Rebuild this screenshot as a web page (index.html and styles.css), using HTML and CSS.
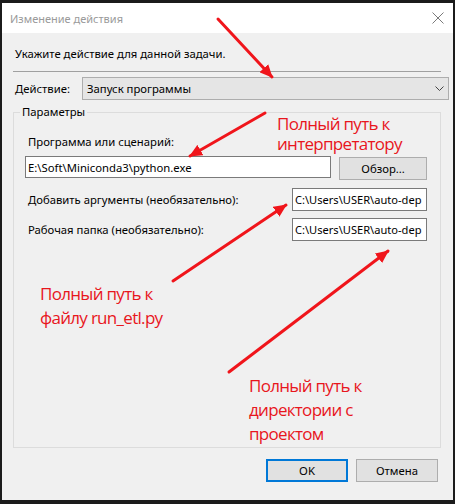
FILE: index.html
```html
<!DOCTYPE html>
<html lang="ru">
<head>
<meta charset="utf-8">
<title>Изменение действия</title>
<link rel="stylesheet" href="styles.css">
</head>
<body>
<div class="window">
  <div class="titlebar">
    <span class="title">Изменение действия</span>
    <svg class="close" width="12" height="12" viewBox="0 0 12 12"><path d="M0.5 0.5 L11.5 11.5 M11.5 0.5 L0.5 11.5" stroke="#7a7a7a" stroke-width="1" fill="none"/></svg>
  </div>
  <div class="content">
    <div class="prompt">Укажите действие для данной задачи.</div>
    <div class="separator"></div>
    <div class="action-row">
      <span class="action-label">Действие:</span>
      <div class="combo">
        <span>Запуск программы</span>
        <svg class="chevron" width="9" height="5" viewBox="0 0 9 5"><path d="M0.5 0.5 L4.5 4.5 L8.5 0.5" stroke="#444" stroke-width="1" fill="none"/></svg>
      </div>
    </div>
    <fieldset class="params">
      <legend>Параметры</legend>
      <div class="params-inner">
        <div class="field-label">Программа или сценарий:</div>
        <div class="program-row">
          <div class="input wide">E:\Soft\Miniconda3\python.exe</div>
          <div class="button browse">Обзор...</div>
        </div>
        <div class="opt-row">
          <span class="opt-label">Добавить аргументы (необязательно):</span>
          <div class="input narrow">C:\Users\USER\auto-dep</div>
        </div>
        <div class="opt-row">
          <span class="opt-label">Рабочая папка (необязательно):</span>
          <div class="input narrow">C:\Users\USER\auto-dep</div>
        </div>
      </div>
    </fieldset>
    <div class="buttons">
      <div class="button ok">OK</div>
      <div class="button">Отмена</div>
    </div>
  </div>
</div>

<svg class="arrows" width="455" height="504" viewBox="0 0 455 504">
  <defs>
    <marker id="head" markerUnits="userSpaceOnUse" markerWidth="14" markerHeight="12" refX="12" refY="6" orient="auto">
      <path d="M0 0 L13 6 L0 12 Z" fill="#f0151b"/>
    </marker>
  </defs>
  <g stroke="#f0151b" stroke-width="3" stroke-linecap="round" marker-end="url(#head)">
    <line x1="218" y1="19" x2="272" y2="77"/>
    <line x1="265" y1="113" x2="190" y2="156"/>
    <line x1="173" y1="281" x2="286" y2="205"/>
    <line x1="229" y1="372" x2="388" y2="251"/>
  </g>
</svg>
<div class="note note-1">Полный путь к<br>интерпретатору</div>
<div class="note note-2">Полный путь к<br>файлу run_etl.py</div>
<div class="note note-3">Полный путь к<br>директории с<br>проектом</div>
</body>
</html>
```
FILE: styles.css
```css
html, body {
  margin: 0;
  padding: 0;
}
body {
  width: 455px;
  height: 504px;
  background: #1b1b1b;
  position: relative;
  overflow: hidden;
  font-family: "Noto Sans", "Open Sans", sans-serif;
  font-size: 11.3px;
  color: #000;
}
.window {
  margin: 3px 0 0 2px;
  width: 451px;
  height: 497px;
  background: #f0f0f0;
  display: flex;
  flex-direction: column;
}
.titlebar {
  height: 30px;
  background: #fff;
  display: flex;
  align-items: center;
  justify-content: space-between;
  padding: 0 9px 0 8px;
  flex-shrink: 0;
}
.title {
  color: #9a9a9a;
  font-size: 11px;
}
.close {
  display: block;
}
.content {
  padding: 0 12px 0 11px;
  display: flex;
  flex-direction: column;
}
.prompt {
  margin-top: 13px;
  padding-left: 2px;
  line-height: 16px;
}
.separator {
  margin-top: 9px;
  height: 1px;
  background: #a0a0a0;
}
.action-row {
  margin-top: 5px;
  margin-right: -8px;
  display: flex;
  align-items: center;
}
.action-label {
  width: 67px;
  padding-left: 2px;
}
.combo {
  flex: 1;
  height: 23px;
  box-sizing: border-box;
  background: #e5e5e5;
  border: 1px solid #adadad;
  display: flex;
  align-items: center;
  justify-content: space-between;
  padding: 0 4px 0 4px;
}
.chevron {
  display: block;
}
.params {
  margin: 4px 0 0 0;
  padding: 0;
  height: 344px;
  box-sizing: border-box;
  border: 1px solid #dcdcdc;
  min-width: 0;
}
.params legend {
  margin-left: 6px;
  padding: 0 2px;
  line-height: 16px;
}
.params-inner {
  padding: 0 13px 0 11px;
  display: flex;
  flex-direction: column;
}
.field-label {
  margin-top: 14px;
  padding-left: 3px;
  line-height: 16px;
}
.program-row {
  margin-top: 6px;
  display: flex;
  align-items: flex-start;
  gap: 8px;
}
.input {
  height: 22px;
  box-sizing: border-box;
  background: #fff;
  border: 1px solid #7a7a7a;
  display: flex;
  align-items: center;
  padding: 0 2px;
  white-space: nowrap;
  overflow: hidden;
}
.input.wide {
  width: 307px;
}
.input.narrow {
  width: 135px;
  height: 23px;
  font-size: 11.1px;
}
.button {
  width: 82px;
  height: 23px;
  box-sizing: border-box;
  background: #e1e1e1;
  border: 1px solid #adadad;
  display: flex;
  align-items: center;
  justify-content: center;
}
.button.browse {
  width: 88px;
  margin-top: 1px;
}
.opt-row {
  margin-top: 8px;
  display: flex;
  align-items: center;
  justify-content: space-between;
}
.opt-row + .opt-row {
  margin-top: 7px;
}
.opt-label {
  padding-left: 3px;
}
.buttons {
  margin-top: 11px;
  display: flex;
  justify-content: flex-end;
  gap: 8px;
  padding-right: 3px;
}
.button.ok {
  border: 2px solid #0078d7;
}
.arrows {
  position: absolute;
  left: 0;
  top: 0;
}
.note {
  position: absolute;
  color: #e8161d;
  font-family: "Open Sans", "Noto Sans", sans-serif;
  font-size: 17px;
  letter-spacing: -0.7px;
  line-height: 20px;
  white-space: nowrap;
}
.note-1 {
  left: 277px;
  top: 114px;
}
.note-2 {
  left: 40px;
  top: 282px;
  line-height: 24px;
}
.note-3 {
  left: 249px;
  top: 374px;
  line-height: 24px;
}
```
